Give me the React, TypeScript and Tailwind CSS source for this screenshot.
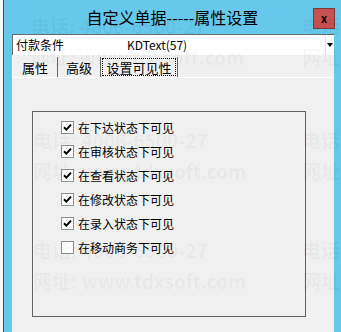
import React from "react";

const font = "font-['Noto_Sans_CJK_SC','Microsoft_YaHei',sans-serif]";

const options = [
  { label: "在下达状态下可见", checked: true },
  { label: "在审核状态下可见", checked: true },
  { label: "在查看状态下可见", checked: true },
  { label: "在修改状态下可见", checked: true },
  { label: "在录入状态下可见", checked: true },
  { label: "在移动商务下可见", checked: false },
];

function CheckBox({ checked }: { checked: boolean }) {
  return (
    <span className="flex h-[13px] w-[13px] shrink-0 items-center justify-center border border-[#8e8f8f] bg-white">
      {checked && (
        <svg width="9" height="9" viewBox="0 0 9 9">
          <path d="M1 4.2 L3.4 6.6 L8 1.6" fill="none" stroke="#000" strokeWidth="2" />
        </svg>
      )}
    </span>
  );
}

function Watermark({ x, y }: { x: number; y: number }) {
  return (
    <div className="absolute font-bold text-[19px] leading-none text-black/[0.04]" style={{ left: x, top: y }}>
      <div className="whitespace-nowrap">电话: 4006-6500-27</div>
      <div className="mt-[12px] whitespace-nowrap">网址: www.tdxsoft.com</div>
    </div>
  );
}

export default function App() {
  return (
    <div className={`relative flex h-[332px] w-[341px] overflow-hidden bg-[#f4f4f4] ${font}`}>
      {/* window behind */}
      <div className="w-[4px] shrink-0 border-r border-[#4a4a4a] bg-[#f7f7f7]" />

      <div className="flex flex-1 flex-col bg-[#66c8ea]">
        {/* title bar */}
        <div className="flex h-[34px] shrink-0 items-start">
          <div className="w-[28px]" />
          <div className="flex-1 pt-[7px] text-center text-[16px] leading-[20px] text-black">
            自定义单据-----属性设置
          </div>
          <button className="mr-[6px] mt-[8px] flex h-[21px] w-[22px] items-center justify-center border border-[#7a3a36] bg-[#c75050] text-[11px] font-bold leading-none text-black">
            x
          </button>
        </div>

        {/* body */}
        <div className="ml-[8px] mr-[7px] flex flex-1 flex-col bg-[#f0f0f0] text-[12px] text-black">
          {/* combo */}
          <div className="flex h-[21px] items-center border-l border-t border-[#6a6a6a] bg-white">
            <span className="w-[114px] pl-[3px] leading-none">付款条件</span>
            <span className="flex-1 leading-none">KDText(57)</span>
            <span className="flex h-full w-[9px] items-center justify-center border-l border-[#e6e6e6]">
              <svg width="6" height="4" viewBox="0 0 6 4">
                <path d="M0 0 H6 L3 4 Z" fill="#000" />
              </svg>
            </span>
          </div>

          {/* tabs */}
          <div className="mt-[2px] flex h-[20px] items-stretch text-[13px]">
            <div className="flex w-[46px] items-center justify-center border-l border-r border-l-white border-r-[#696969] leading-none">
              属性
            </div>
            <div className="flex w-[43px] items-center justify-center border-r border-[#696969] leading-none">
              高级
            </div>
            <div className="flex w-[77px] items-center justify-center border-r border-[#696969] px-[1px] py-[1px]">
              <span className="flex h-full w-full items-center justify-center border border-dotted border-black leading-none">
                设置可见性
              </span>
            </div>
          </div>

          {/* panel */}
          <div className="flex-1 border-t border-white pl-[20px] pt-[33px]">
            <div className="flex h-[206px] w-[274px] flex-col gap-[11px] border border-[#646464] pl-[28px] pt-[9px]">
              {options.map((o) => (
                <label key={o.label} className="flex h-[13px] items-center gap-[4px] leading-none">
                  <CheckBox checked={o.checked} />
                  <span>{o.label}</span>
                </label>
              ))}
            </div>
          </div>
        </div>
      </div>

      {/* watermark overlay */}
      <div className="pointer-events-none absolute inset-0">
        <Watermark x={31} y={16} />
        <Watermark x={302} y={16} />
        <Watermark x={33} y={130} />
        <Watermark x={302} y={130} />
        <Watermark x={33} y={240} />
        <Watermark x={302} y={240} />
      </div>
    </div>
  );
}
